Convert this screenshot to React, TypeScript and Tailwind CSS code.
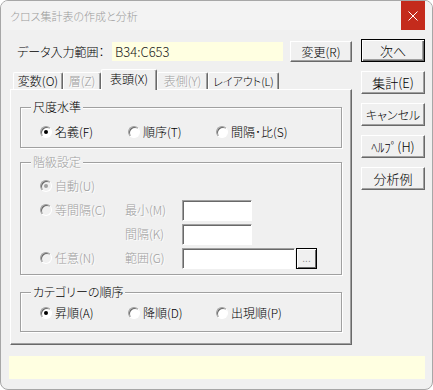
import React from 'react';

const dim = 'text-[#a0a0a0] [text-shadow:1px_1px_0_#fff]';

function Radio({ label, checked = false, disabled = false }: { label: string; checked?: boolean; disabled?: boolean }) {
  return (
    <label className="flex items-center gap-[3px] h-[14px] whitespace-nowrap">
      <span
        className={`w-[12px] h-[12px] rounded-full flex items-center justify-center border border-t-[#a0a0a0] border-l-[#a0a0a0] border-r-white border-b-white shadow-[inset_1px_1px_0_#696969] ${
          disabled ? 'bg-[#f0f0f0]' : 'bg-white'
        }`}
      >
        {checked && <span className={`w-[4px] h-[4px] rounded-full ${disabled ? 'bg-[#a0a0a0]' : 'bg-black'}`} />}
      </span>
      <span className={disabled ? dim : 'text-black'}>{label}</span>
    </label>
  );
}

function Btn({ children, def = false, className = '' }: { children: React.ReactNode; def?: boolean; className?: string }) {
  return (
    <button
      className={`flex items-center justify-center bg-[#f0f0f0] leading-[14px] text-black ${
        def
          ? 'border border-black shadow-[inset_1px_1px_0_#fff,inset_-1px_-1px_0_#696969,inset_-2px_-2px_0_#a0a0a0]'
          : 'border border-t-white border-l-white border-r-[#696969] border-b-[#696969] shadow-[inset_-1px_-1px_0_#a0a0a0]'
      } ${className}`}
    >
      {children}
    </button>
  );
}

function Group({ title, disabled = false, className = '', children }: { title: string; disabled?: boolean; className?: string; children: React.ReactNode }) {
  return (
    <div className={`relative border border-[#a0a0a0] shadow-[inset_1px_1px_0_#fff,1px_1px_0_#fff] ${className}`}>
      <span className={`absolute -top-[8px] left-[10px] px-[2px] bg-[#f0f0f0] leading-[14px] ${disabled ? dim : 'text-black'}`}>
        {title}
      </span>
      {children}
    </div>
  );
}

function Field({ w }: { w: string }) {
  return (
    <div
      className={`${w} h-[21px] bg-white border border-t-[#a0a0a0] border-l-[#a0a0a0] border-r-white border-b-white shadow-[inset_1px_1px_0_#696969]`}
    />
  );
}

function Tab({ label, w, selected = false, disabled = false, className = '' }: { label: string; w: string; selected?: boolean; disabled?: boolean; className?: string }) {
  return (
    <div
      className={`${w} flex items-center justify-center rounded-t-[2px] border-t border-l border-t-white border-l-white border-r border-r-[#696969] shadow-[inset_-1px_0_0_#a0a0a0] bg-[#f0f0f0] ${
        selected ? 'h-[21px] -mb-[1px] relative z-10 pb-[3px]' : 'h-[17px]'
      } ${disabled ? dim : 'text-black'} ${className}`}
    >
      {label}
    </div>
  );
}

export default function App() {
  return (
    <div className="w-[433px] h-[390px] overflow-hidden bg-[#f0f0f0] border border-[#a7a7a7] rounded-[8px] flex flex-col font-['Noto_Sans_CJK_JP',sans-serif] font-light [font-feature-settings:'palt'] text-[12px] leading-[14px] text-black">
      {/* title bar */}
      <div className="h-[29px] shrink-0 flex items-stretch bg-[#f3f3f3]">
        <div className="pl-[9px] flex items-center text-[11px] text-[#9b9b9b]">クロス集計表の作成と分析</div>
        <div className="ml-auto mr-[7px] w-[24px] bg-[#c42b1c] flex items-center justify-center">
          <svg width="10" height="10" viewBox="0 0 10 10">
            <path d="M0.5 0.5L9.5 9.5M9.5 0.5L0.5 9.5" stroke="#fff" strokeWidth="1" />
          </svg>
        </div>
      </div>

      <div className="flex pl-[9px]">
        {/* left column */}
        <div className="w-[342px] flex flex-col">
          <div className="mt-[11px] h-[21px] flex items-center">
            <span className="w-[102px] pl-[7px]">データ入力範囲：</span>
            <div className="w-[171px] h-[19px] bg-[#ffffe1] pl-[3px] flex items-center text-[13px] text-[#1a1a1a]">B34:C653</div>
            <Btn className="ml-[7px] w-[62px] h-[21px] text-[12px]">変更(R)</Btn>
          </div>

          <div className="mt-[7px] h-[20px] flex items-end pl-[3px]">
            <Tab label="変数(O)" w="w-[50px]" />
            <Tab label="層(Z)" w="w-[38px]" disabled />
            <Tab label="表頭(X)" w="w-[56px]" selected />
            <Tab label="表側(Y)" w="w-[51px]" disabled />
            <Tab label="レイアウト(L)" w="w-[71px]" className="text-[11px]" />
          </div>

          <div className="h-[256px] border border-t-white border-l-white border-r-[#696969] border-b-[#696969] shadow-[inset_-1px_-1px_0_#a0a0a0] px-[9px] flex flex-col">
            <Group title="尺度水準" className="mt-[17px] pt-[17px] pb-[8px] pl-[19px] flex">
              <div className="w-[88px]"><Radio label="名義(F)" checked /></div>
              <div className="w-[88px]"><Radio label="順序(T)" /></div>
              <div className="w-[88px]"><Radio label="間隔･比(S)" /></div>
            </Group>

            <Group title="階級設定" disabled className="mt-[14px] pt-[11px] pb-[4px] pl-[19px]">
              <div className="h-[24px] flex items-center">
                <Radio label="自動(U)" checked disabled />
              </div>
              <div className="h-[24px] flex items-center">
                <div className="w-[85px]"><Radio label="等間隔(C)" disabled /></div>
                <span className={`w-[57px] ${dim}`}>最小(M)</span>
                <Field w="w-[70px]" />
              </div>
              <div className="h-[24px] flex items-center">
                <div className="w-[85px]" />
                <span className={`w-[57px] ${dim}`}>間隔(K)</span>
                <Field w="w-[70px]" />
              </div>
              <div className="h-[24px] flex items-center">
                <div className="w-[85px]"><Radio label="任意(N)" disabled /></div>
                <span className={`w-[57px] ${dim}`}>範囲(G)</span>
                <Field w="w-[113px]" />
                <div className="ml-[1px] w-[21px] h-[21px] border border-black bg-[#f0f0f0] shadow-[inset_1px_1px_0_#fff,inset_-1px_-1px_0_#696969] flex items-end justify-center pb-[4px] font-['Liberation_Sans',sans-serif] font-normal text-[10px] leading-[10px] text-[#8c8c8c]">
                  ...
                </div>
              </div>
            </Group>

            <Group title="カテゴリーの順序" className="mt-[17px] pt-[13px] pb-[11px] pl-[19px] flex">
              <div className="w-[88px]"><Radio label="昇順(A)" checked /></div>
              <div className="w-[88px]"><Radio label="降順(D)" /></div>
              <div className="w-[88px]"><Radio label="出現順(P)" /></div>
            </Group>
          </div>
        </div>

        {/* right column */}
        <div className="ml-[9px] w-[64px] pt-[9px] flex flex-col gap-[9px]">
          <Btn def className="h-[23px] text-[13px]">次へ</Btn>
          <Btn className="h-[23px] text-[13px]">集計(E)</Btn>
          <Btn className="h-[23px] text-[12px]">キャンセル</Btn>
          <Btn className="h-[23px] text-[13px]">ﾍﾙﾌﾟ(H)</Btn>
          <Btn className="h-[23px] text-[13px]">分析例</Btn>
        </div>
      </div>

      <div className="mt-[11px] ml-[8px] w-[416px] h-[23px] bg-[#ffffe1]" />
    </div>
  );
}
